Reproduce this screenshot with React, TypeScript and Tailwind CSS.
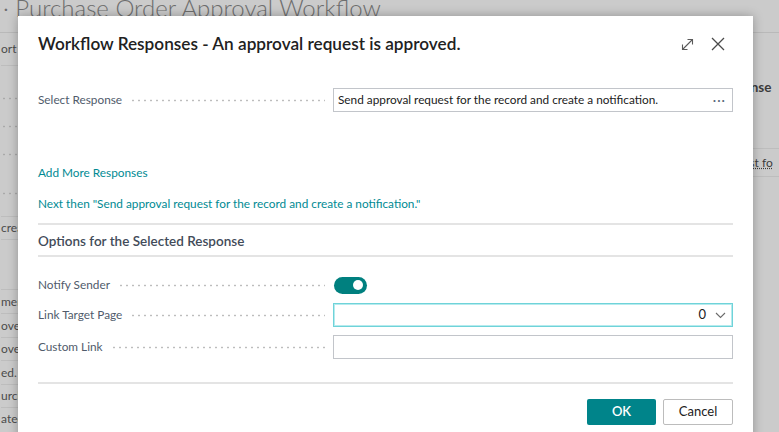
import React from 'react';

const leader =
  'ml-[8px] flex-1 h-[3px] bg-[radial-gradient(circle,#bdbdbd_0.8px,transparent_1.2px)] bg-[length:6px_3px] bg-repeat-x';

const FieldRow: React.FC<{ label: string; children: React.ReactNode; className?: string }> = ({
  label,
  children,
  className = '',
}) => (
  <div className={`flex items-center h-[24px] ${className}`}>
    <div className="w-[295px] flex items-center pr-[8px]">
      <span className="shrink-0 text-[11.8px] text-[#505b6b]">{label}</span>
      <span className={leader} />
    </div>
    <div className="flex-1 h-full">{children}</div>
  </div>
);

const ExpandIcon = () => (
  <svg width="13" height="13" viewBox="0 0 13 13" fill="none" stroke="#5a5a5a" strokeWidth="1.1">
    <path d="M1.5 11.5 11.5 1.5" />
    <path d="M6.5 1.5h5v5" />
    <path d="M1.5 6.5v5h5" />
  </svg>
);

const CloseIcon = () => (
  <svg width="14" height="14" viewBox="0 0 14 14" fill="none" stroke="#4a4a4a" strokeWidth="1.3">
    <path d="M1 1l12 12M13 1 1 13" />
  </svg>
);

// rows of the page behind the dialog, left edge (only a sliver shows)
const leftRows: { h: number; text?: string; dots?: boolean; border?: boolean }[] = [
  { h: 33, text: 'ort t', border: true },
  { h: 18 },
  { h: 28, dots: true },
  { h: 28, dots: true },
  { h: 28, dots: true },
  { h: 11 },
  { h: 28, dots: true },
  { h: 10, border: true },
  { h: 23, text: 'creas', border: true },
  { h: 50, border: true },
  { h: 24, text: 'ment', border: true },
  { h: 24, text: 'oved', border: true },
  { h: 23, text: 'ovec', border: true },
  { h: 24, text: 'ed.', border: true },
  { h: 23, text: 'urcha', border: true },
  { h: 22, text: 'ated' },
];

export default function App() {
  return (
    <div className="relative w-[779px] h-[432px] overflow-hidden bg-[#cbcbcb] font-['Lato','Segoe_UI',sans-serif]">
      {/* page behind the dialog */}
      <div className="flex flex-col h-full">
        <div className="h-[33px] shrink-0 border-b border-[#b9b9b9] pl-[3px] overflow-hidden">
          <div className="-mt-[8px] text-[24px] leading-[32px] font-light text-[#6e6e6e] whitespace-nowrap">
            · Purchase Order Approval Workflow
          </div>
        </div>
        <div className="flex flex-1">
          <div className="w-[60px] flex flex-col pl-[1px]">
            {leftRows.map((r, i) => (
              <div
                key={i}
                style={{ height: r.h }}
                className={`shrink-0 flex items-center text-[12px] text-[#4b4b4b] whitespace-nowrap ${
                  r.border ? 'border-b border-[#bdbdbd]' : ''
                }`}
              >
                {r.dots ? (
                  <span className="w-[16px] h-[3px] bg-[radial-gradient(circle,#a9a9a9_0.8px,transparent_1.2px)] bg-[length:6px_3px] bg-repeat-x" />
                ) : (
                  r.text
                )}
              </div>
            ))}
          </div>
          <div className="flex-1" />
          <div className="w-[36px] flex flex-col text-[12px] text-[#3c3c3c] whitespace-nowrap">
            <div className="h-[42px]" />
            <div className="h-[24px] flex items-center font-bold text-[13.5px]">onse</div>
            <div className="h-[50px] border-b border-[#bdbdbd]" />
            <div className="h-[28px] flex items-center border-b border-[#bdbdbd]">
              <span className="underline decoration-dotted">est fo</span>
            </div>
          </div>
        </div>
      </div>

      {/* dialog */}
      <div className="absolute left-[18px] top-[16px] w-[735px] h-[440px] bg-white shadow-[0_0_10px_rgba(0,0,0,0.28)] flex flex-col pl-[20px] pr-[20px] text-[#212121]">
        <div className="flex items-center justify-between h-[24px] mt-[16px] pr-[8px]">
          <h1 className="text-[17.2px] font-semibold text-[#212121] whitespace-nowrap">
            Workflow Responses - An approval request is approved.
          </h1>
          <div className="flex items-center gap-[17px]">
            <ExpandIcon />
            <CloseIcon />
          </div>
        </div>

        <FieldRow label="Select Response" className="mt-[32px]">
          <div className="h-full border border-[#c2c5ca] flex items-center justify-between pl-[4px] pr-[6px]">
            <span className="text-[11.8px] text-[#212121] whitespace-nowrap">
              Send approval request for the record and create a notification.
            </span>
            <span className="text-[13px] leading-none text-[#59677a] tracking-[1px]">···</span>
          </div>
        </FieldRow>

        <div className="mt-[53px] h-[16px] flex items-center text-[11.8px] text-[#008a93]">Add More Responses</div>
        <div className="mt-[15px] h-[16px] flex items-center text-[11.8px] text-[#008a93] whitespace-nowrap">
          Next then "Send approval request for the record and create a notification."
        </div>

        <div className="mt-[11px] border-t-2 border-[#e4e4e4]" />
        <div className="mt-[7px] h-[18px] flex items-center text-[13.5px] font-semibold text-[#424b59]">
          Options for the Selected Response
        </div>
        <div className="mt-[5px] border-t-2 border-[#e4e4e4]" />

        <FieldRow label="Notify Sender" className="mt-[16px]">
          <div className="h-full flex items-center pl-[1px]">
            <div className="w-[33px] h-[17px] rounded-full bg-[#00807f] flex items-center justify-end pr-[4px]">
              <span className="w-[10px] h-[10px] rounded-full bg-white" />
            </div>
          </div>
        </FieldRow>

        <FieldRow label="Link Target Page" className="mt-[6px]">
          <div className="h-full border border-[#6fd3d9] shadow-[inset_0_0_0_1px_#b6ebee] flex items-center justify-end pr-[6px] gap-[9px]">
            <span className="text-[13px] text-[#212121]">0</span>
            <svg width="11" height="7" viewBox="0 0 11 7" fill="none" stroke="#6b6b6b" strokeWidth="1.1">
              <path d="M1 1l4.5 4.5L10 1" />
            </svg>
          </div>
        </FieldRow>

        <FieldRow label="Custom Link" className="mt-[8px]">
          <div className="h-full border border-[#c2c5ca]" />
        </FieldRow>

        <div className="mt-[23px] border-t-2 border-[#e4e4e4]" />

        <div className="mt-[15px] flex justify-end gap-[7px]">
          <button className="w-[69px] h-[26px] rounded-[2px] bg-[#00848a] text-white text-[13px] font-semibold">
            OK
          </button>
          <button className="w-[70px] h-[26px] rounded-[2px] border border-[#bcbcbc] bg-white text-[#212121] text-[13px]">
            Cancel
          </button>
        </div>
      </div>
    </div>
  );
}
